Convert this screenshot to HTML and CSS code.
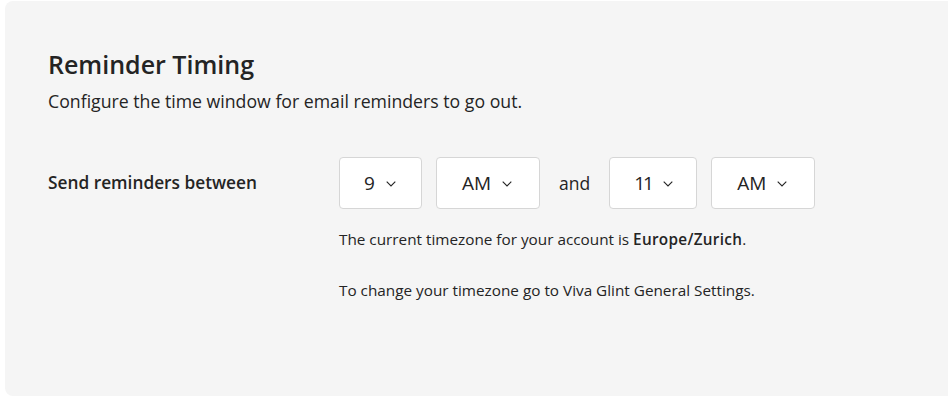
FILE: index.html
```html
<!DOCTYPE html>
<html>
<head>
<meta charset="utf-8">
<link rel="stylesheet" href="styles.css">
</head>
<body>
<div class="card">
  <h2 class="title">Reminder Timing</h2>
  <p class="desc">Configure the time window for email reminders to go out.</p>
  <div class="row">
    <div class="label">Send reminders between</div>
    <div class="controls">
      <div class="selects">
        <div class="select s-hour"><span>9</span><svg class="chev" width="10" height="6" viewBox="0 0 10 6"><path d="M0.7 0.7 L5 5 L9.3 0.7" fill="none" stroke="#242424" stroke-width="1.1"/></svg></div>
        <div class="select s-ampm"><span>AM</span><svg class="chev" width="10" height="6" viewBox="0 0 10 6"><path d="M0.7 0.7 L5 5 L9.3 0.7" fill="none" stroke="#242424" stroke-width="1.1"/></svg></div>
        <div class="and">and</div>
        <div class="select s-hour2"><span class="num">11</span><svg class="chev" width="10" height="6" viewBox="0 0 10 6"><path d="M0.7 0.7 L5 5 L9.3 0.7" fill="none" stroke="#242424" stroke-width="1.1"/></svg></div>
        <div class="select s-ampm"><span>AM</span><svg class="chev" width="10" height="6" viewBox="0 0 10 6"><path d="M0.7 0.7 L5 5 L9.3 0.7" fill="none" stroke="#242424" stroke-width="1.1"/></svg></div>
      </div>
      <p class="note">The current timezone for your account is <b>Europe/Zurich</b>.</p>
      <p class="note">To change your timezone go to Viva Glint General Settings.</p>
    </div>
  </div>
</div>
</body>
</html>
```
FILE: styles.css
```css
html, body {
  margin: 0;
  padding: 0;
  background: #ffffff;
}
body {
  font-family: "Open Sans", "Noto Sans", sans-serif;
  color: #242424;
  padding: 1px 0 0 5px;
  overflow: hidden;
}
.card {
  background: #f5f5f5;
  border-radius: 8px;
  width: 960px;
  height: 395px;
  box-sizing: border-box;
  padding: 47px 0 0 43px;
}
.title {
  margin: 0;
  font-size: 25px;
  line-height: 32px;
  font-weight: 600;
}
.desc {
  margin: 9px 0 0;
  font-size: 17.7px;
  line-height: 24px;
}
.row {
  display: flex;
  margin-top: 44px;
}
.label {
  width: 291px;
  flex: none;
  font-size: 17.3px;
  font-weight: 600;
  line-height: 24px;
  margin-top: 14px;
}
.selects {
  display: flex;
  align-items: center;
  gap: 14px;
}
.select {
  height: 52px;
  box-sizing: border-box;
  background: #ffffff;
  border: 1px solid #d6d6d6;
  border-radius: 4px;
  display: flex;
  align-items: center;
  padding-left: 24px;
  font-size: 19px;
  font-weight: 500;
  gap: 11px;
}
.s-hour { width: 83px; }
.s-hour2 { width: 88px; }
.s-hour2 .num { letter-spacing: -2px; }
.s-ampm { width: 104px; padding-left: 25px; }
.chev { flex: none; margin-top: 1px; }
.and {
  font-size: 17.5px;
  margin: 0 5px;
}
.note {
  margin: 0;
  font-size: 15.3px;
  line-height: 20px;
}
.selects + .note { margin-top: 20px; }
.note + .note { margin-top: 31px; }
.note b { font-weight: 600; letter-spacing: 0.3px; }
```
